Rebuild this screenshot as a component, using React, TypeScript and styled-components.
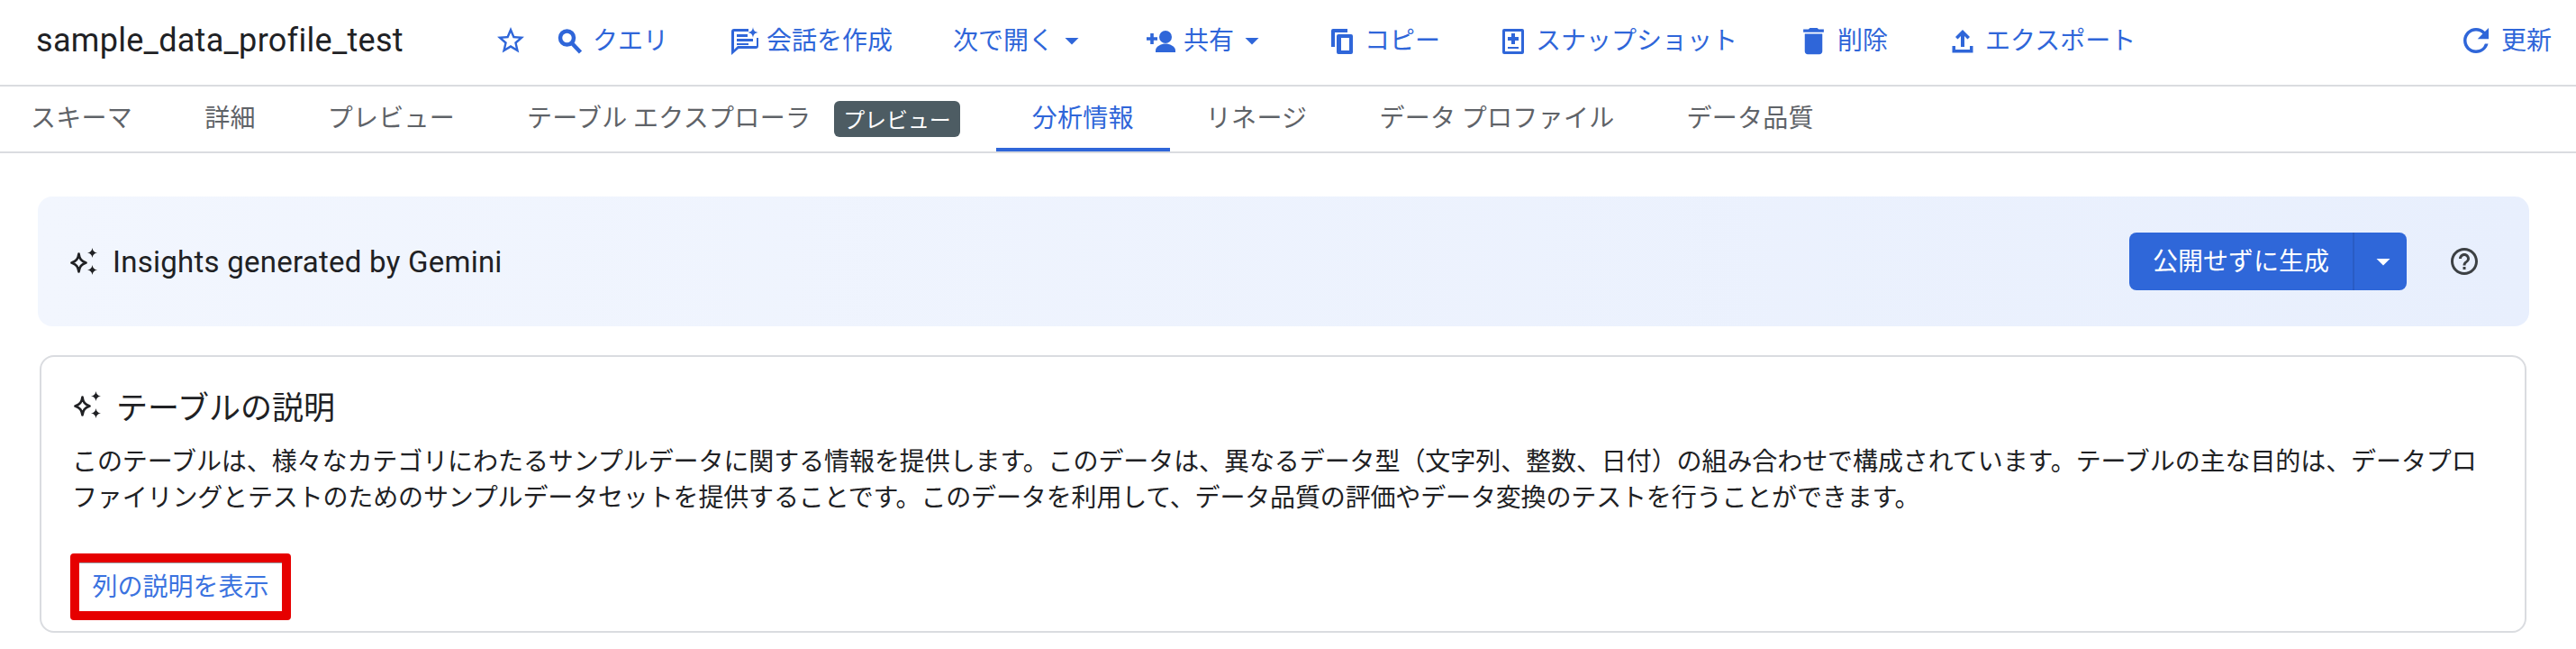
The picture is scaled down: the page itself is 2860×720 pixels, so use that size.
import React from "react";
import styled, { createGlobalStyle } from "styled-components";
import { MdStarBorder, MdDelete, MdRefresh, MdHelpOutline, MdArrowDropDown } from "react-icons/md";

const Global = createGlobalStyle`
  html, body { margin: 0; padding: 0; background: #fff; }
  body { font-family: Roboto, "Noto Sans CJK JP", sans-serif; width: 2860px; height: 720px; overflow: hidden; }
`;
const Page = styled.div`width: 2860px; height: 720px; background: #fff;`;
const Header = styled.header`
  display: flex; align-items: center; height: 90px; box-sizing: content-box;
  border-bottom: 2px solid #dadce0; padding: 0 27px 4px 40px; color: #2f66d9;
`;
const Title = styled.h1`
  margin: 0; width: 509px; font: 400 36px Roboto, sans-serif; letter-spacing: 0.3px; color: #202124;
`;
const Action = styled.div<{ $left?: number; $end?: boolean }>`
  display: flex; align-items: center; gap: 7px; height: 40px;
  margin-left: ${(p) => (p.$end ? "auto" : `${p.$left ?? 66}px`)};
  font: 400 28px "Noto Sans CJK JP", sans-serif; white-space: nowrap; color: #2f66d9;
  svg { flex: none; }
`;
const Label = styled.span`padding-bottom: 4px;`;
const CaretSlot = styled.span`display: flex; margin-left: -5px;`;
const Tabs = styled.nav`
  display: flex; align-items: stretch; height: 72px; border-bottom: 2px solid #dadce0;
`;
const Tab = styled.div<{ $active?: boolean }>`
  display: flex; align-items: center; gap: 26px; padding: 0 40px 3px; box-sizing: border-box;
  &:first-child { padding-left: 34px; }
  font: 400 28px "Noto Sans CJK JP", sans-serif; letter-spacing: 0.28px;
  color: ${(p) => (p.$active ? "#2f66d9" : "#5f6368")};
  border-bottom: 4px solid ${(p) => (p.$active ? "#2f66d9" : "transparent")};
  white-space: nowrap;
`;
const Badge = styled.span`
  display: inline-flex; align-items: center; height: 40px; padding: 0 10px 2px; box-sizing: border-box; border-radius: 6px;
  background: #4d5c63; color: #fff; font-size: 24px; letter-spacing: -0.1px; margin-top: 7px;
`;
const Content = styled.main`padding: 48px 52px 0 42px;`;
const Banner = styled.section`
  display: flex; align-items: center; height: 144px; box-sizing: border-box;
  padding: 0 54px 0 36px; border-radius: 16px;
  background: linear-gradient(90deg, #f2f6fe 0%, #e8effd 100%);
`;
const BannerTitle = styled.h2`
  display: flex; align-items: center; gap: 17px; margin: 0;
  font: 400 33px Roboto, sans-serif; letter-spacing: 0.25px; color: #202124;
`;
const SplitButton = styled.div`
  display: flex; margin-left: auto; height: 64px; border-radius: 8px; background: #2f67d9; color: #fff; overflow: hidden;
  font: 400 28px "Noto Sans CJK JP", sans-serif;
`;
const MainPart = styled.div`
  display: flex; align-items: center; padding: 0 26px 4px; border-right: 2px solid #2a5cc4; white-space: nowrap;
`;
const ArrowPart = styled.div`display: flex; align-items: center; justify-content: center; width: 58px; padding-left: 6px; box-sizing: border-box;`;
const Help = styled.div`display: flex; margin-left: 46px; color: #3c4043;`;
const Card = styled.section`
  margin: 32px 3px 0 2px; height: 308px; box-sizing: border-box; border: 2px solid #dadce0; border-radius: 16px;
  padding: 28px 34px 0;
`;
const CardTitle = styled.h3`
  display: flex; align-items: center; gap: 17px; margin: 0 0 16px 2px; height: 50px;
  font: 400 35px "Noto Sans CJK JP", sans-serif; color: #202124;
`;
const Body = styled.p`
  margin: 0; font: 400 28px/40px "Noto Sans CJK JP", sans-serif; color: #202124;
`;
const BodyLine = styled.span<{ $tracking: number }>`
  display: block; white-space: nowrap; letter-spacing: ${(p) => p.$tracking}px;
`;
const Highlight = styled.div`
  display: inline-flex; align-items: center; justify-content: center; box-sizing: border-box;
  margin-top: 44px; margin-left: -2px; padding-bottom: 4px; width: 245px; height: 74px; border: 10px solid #e60000; border-radius: 4px;
  box-shadow: inset 0 1px 0 #9aa0a6;
  font: 400 28px "Noto Sans CJK JP", sans-serif; color: #3b73e0;
`;

const Sparkle = () => (
  <svg width="30" height="30" viewBox="0 0 30 30" fill="none">
    <path d="M9.500 6.500C10.300 12 12 14.600 17.500 16.500C12 18.400 10.300 21 9.500 26.500C8.700 21 7 18.400 1.500 16.500C7 14.600 8.700 12 9.500 6.500Z" stroke="#202124" strokeWidth="2.600" strokeLinejoin="round" />
    <path d="M24.500 0C25 3.300 26.700 5 30 5.500C26.700 6 25 7.700 24.500 11C24 7.700 22.300 6 19 5.500C22.300 5 24 3.300 24.500 0Z M24.500 19C25 22.300 26.700 24 30 24.500C26.700 25 25 26.700 24.500 30C24 26.700 22.300 25 19 24.500C22.300 24 24 22.300 24.500 19Z" fill="#202124" />
  </svg>
);
const SearchIcon = () => (
  <svg width="36" height="36" viewBox="0 0 36 36" fill="none" stroke="#2f66d9" strokeWidth="4.500">
    <circle cx="14.500" cy="15" r="7.500" />
    <path d="M20 21 29.500 31" />
  </svg>
);
const ConvIcon = () => (
  <svg width="36" height="36" viewBox="0 0 36 36" fill="#2f66d9">
    <path d="M4 8a3 3 0 0 1 3-3h16v3H7v20l4-4h21v-9h2v9a3 3 0 0 1-3 3H12l-8 7Z" />
    <path d="M10 11h12v3H10zM10 16h18v3H10zM10 21h13v2H10z" />
    <path d="M28 3c.6 4 1.900 5.400 6 6-4.100.6-5.400 2-6 6-.6-4-1.900-5.400-6-6 4.100-.6 5.400-2 6-6Z" />
  </svg>
);
const PersonAddIcon = () => (
  <svg width="36" height="36" viewBox="0 0 36 36" fill="#2f66d9">
    <path d="M6.200 10h3.600v4.200H14v3.600H9.800V22H6.200v-4.200H2v-3.600h4.200Z" />
    <circle cx="23" cy="14" r="7" />
    <path d="M12 31v-2c0-5 7-7.500 11-7.500S34 24 34 29v2Z" />
  </svg>
);
const CopyIcon = () => (
  <svg width="36" height="36" viewBox="0 0 36 36" fill="#2f66d9">
    <path d="M6 7a2 2 0 0 1 2-2h16v4H10v16H6Z" />
    <path fillRule="evenodd" d="M14 11h14a2 2 0 0 1 2 2v18a2 2 0 0 1-2 2H14a2 2 0 0 1-2-2V13a2 2 0 0 1 2-2Zm3 4v14h9V15Z" />
  </svg>
);
const SnapIcon = () => (
  <svg width="36" height="36" viewBox="0 0 36 36" fill="#2f66d9">
    <path fillRule="evenodd" d="M8 5h20a2 2 0 0 1 2 2v24a2 2 0 0 1-2 2H8a2 2 0 0 1-2-2V7a2 2 0 0 1 2-2Zm1 3v22h18V8Z" />
    <path d="M16 10h4v4h4v4h-4v4h-4v-4h-4v-4h4zM12 25h12v2H12z" />
  </svg>
);
const UploadIcon = () => (
  <svg width="36" height="36" viewBox="0 0 36 36" fill="#2f66d9">
    <path d="M18 6l8 8-2.500 2.500L20 13v12h-4V13l-3.500 3.500L10 14Z" />
    <path d="M6.500 24H10v4h16v-4h3.500v7.500h-23Z" />
  </svg>
);
const Caret = () => <MdArrowDropDown size={36} />;

const App = () => (
  <Page>
    <Global />
    <Header>
      <Title>sample_data_profile_test</Title>
      <Action $left={0}><MdStarBorder size={36} /></Action>
      <Action $left={30}><SearchIcon /><Label>クエリ</Label></Action>
      <Action $left={66}><ConvIcon /><Label>会話を作成</Label></Action>
      <Action $left={67}><Label>次で開く</Label><CaretSlot><Caret /></CaretSlot></Action>
      <Action $left={63}><PersonAddIcon /><Label>共有</Label><CaretSlot><Caret /></CaretSlot></Action>
      <Action $left={64}><CopyIcon /><Label>コピー</Label></Action>
      <Action $left={63}><SnapIcon /><Label>スナップショット</Label></Action>
      <Action $left={65}><MdDelete size={39} /><Label>削除</Label></Action>
      <Action $left={65}><UploadIcon /><Label>エクスポート</Label></Action>
      <Action $end><MdRefresh size={42} /><Label>更新</Label></Action>
    </Header>
    <Tabs>
      <Tab>スキーマ</Tab>
      <Tab>詳細</Tab>
      <Tab>プレビュー</Tab>
      <Tab>テーブル エクスプローラ<Badge>プレビュー</Badge></Tab>
      <Tab $active>分析情報</Tab>
      <Tab>リネージ</Tab>
      <Tab>データ プロファイル</Tab>
      <Tab>データ品質</Tab>
    </Tabs>
    <Content>
      <Banner>
        <BannerTitle><Sparkle />Insights generated by Gemini</BannerTitle>
        <SplitButton>
          <MainPart>公開せずに生成</MainPart>
          <ArrowPart><Caret /></ArrowPart>
        </SplitButton>
        <Help><MdHelpOutline size={36} /></Help>
      </Banner>
      <Card>
        <CardTitle><Sparkle />テーブルの説明</CardTitle>
        <Body>
          <BodyLine $tracking={-0.08}>このテーブルは、様々なカテゴリにわたるサンプルデータに関する情報を提供します。このデータは、異なるデータ型（文字列、整数、日付）の組み合わせで構成されています。テーブルの主な目的は、データプロ</BodyLine>
          <BodyLine $tracking={-0.15}>ファイリングとテストのためのサンプルデータセットを提供することです。このデータを利用して、データ品質の評価やデータ変換のテストを行うことができます。</BodyLine>
        </Body>
        <Highlight>列の説明を表示</Highlight>
      </Card>
    </Content>
  </Page>
);
export default App;
